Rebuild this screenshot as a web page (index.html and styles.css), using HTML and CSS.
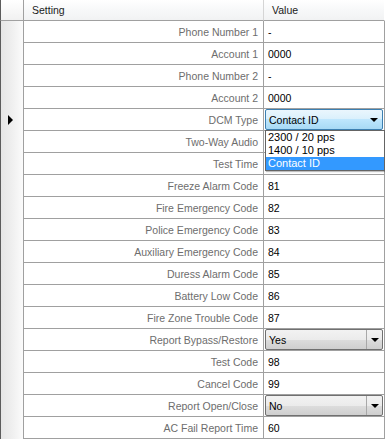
FILE: index.html
```html
<!DOCTYPE html>
<html>
<head>
<meta charset="utf-8">
<link rel="stylesheet" href="styles.css">
</head>
<body>
<div class="grid">
  <div class="rh corner"></div><div class="hc hc-set">Setting</div><div class="hc hc-val">Value</div>

  <div class="rh"></div><div class="name">Phone Number 1</div><div class="val">-</div>
  <div class="rh"></div><div class="name">Account 1</div><div class="val">0000</div>
  <div class="rh"></div><div class="name">Phone Number 2</div><div class="val">-</div>
  <div class="rh"></div><div class="name">Account 2</div><div class="val">0000</div>
  <div class="rh"><span class="cur"></span></div><div class="name">DCM Type</div>
  <div class="val has-combo">
    <div class="combo combo-hot"><span class="combo-text">Contact ID</span><span class="combo-btn"><i class="arr"></i></span></div>
    <div class="list">
      <div class="item">2300 / 20 pps</div>
      <div class="item">1400 / 10 pps</div>
      <div class="item sel">Contact ID</div>
    </div>
  </div>
  <div class="rh"></div><div class="name">Two-Way Audio</div><div class="val"></div>
  <div class="rh"></div><div class="name">Test Time</div><div class="val"></div>
  <div class="rh"></div><div class="name">Freeze Alarm Code</div><div class="val">81</div>
  <div class="rh"></div><div class="name">Fire Emergency Code</div><div class="val">82</div>
  <div class="rh"></div><div class="name">Police Emergency Code</div><div class="val">83</div>
  <div class="rh"></div><div class="name">Auxiliary Emergency Code</div><div class="val">84</div>
  <div class="rh"></div><div class="name">Duress Alarm Code</div><div class="val">85</div>
  <div class="rh"></div><div class="name">Battery Low Code</div><div class="val">86</div>
  <div class="rh"></div><div class="name">Fire Zone Trouble Code</div><div class="val">87</div>
  <div class="rh"></div><div class="name">Report Bypass/Restore</div>
  <div class="val has-combo">
    <div class="combo combo-gray"><span class="combo-text">Yes</span><span class="combo-btn"><i class="arr"></i></span></div>
  </div>
  <div class="rh"></div><div class="name">Test Code</div><div class="val">98</div>
  <div class="rh"></div><div class="name">Cancel Code</div><div class="val">99</div>
  <div class="rh"></div><div class="name">Report Open/Close</div>
  <div class="val has-combo">
    <div class="combo combo-gray"><span class="combo-text">No</span><span class="combo-btn"><i class="arr"></i></span></div>
  </div>
  <div class="rh"></div><div class="name">AC Fail Report Time</div><div class="val">60</div>
</div>
</body>
</html>
```

FILE: styles.css
```css
* { box-sizing: border-box; }
html, body {
  margin: 0;
  padding: 0;
  background: #ffffff;
  overflow: hidden;
}
body {
  font-family: "Liberation Sans", Arial, sans-serif;
  font-size: 10.5px;
  color: #000;
}
.grid {
  display: grid;
  grid-template-columns: 24px 240px 121px;
  grid-template-rows: 21px repeat(19, 22px);
  width: 385px;
  height: 439px;
}
.rh {
  border-left: 1px solid #5c5c5c;
  border-right: 1px solid #a0a0a0;
  background: linear-gradient(to right, #e6e6e6 0%, #efefef 50%, #fbfbfb 100%);
  position: relative;
  display: flex;
  align-items: center;
}
.rh.corner {
  background: linear-gradient(#ffffff, #f1f1f1);
  border-bottom: 1px solid #a0a0a0;
}
.cur {
  width: 0;
  height: 0;
  margin-left: 7px;
  border-left: 5px solid #000;
  border-top: 5px solid transparent;
  border-bottom: 5px solid transparent;
}
.hc {
  background: linear-gradient(#ffffff 0%, #f7f8f9 50%, #f1f2f3 100%);
  border-bottom: 1px solid #a0a0a0;
  display: flex;
  align-items: center;
  color: #1a1a1a;
  padding-left: 8px;
}
.hc-set { border-right: 1px solid #d5d5d5; }
.hc-val { border-right: 1px solid #ffffff; }
.name, .val {
  border-bottom: 1px solid #a0a0a0;
  border-right: 1px solid #a0a0a0;
  display: flex;
  align-items: center;
  white-space: nowrap;
}
.name {
  justify-content: flex-end;
  padding-right: 5px;
  color: #6d6d6d;
}
.val {
  padding-left: 4px;
  color: #000;
}
.has-combo {
  position: relative;
  padding: 0 1px 0 1px;
  align-items: stretch;
}
.combo {
  flex: 1;
  display: flex;
  align-items: center;
  border-radius: 2px;
  margin: 0 0 0 0;
}
.combo-text {
  flex: 1;
  padding-left: 3px;
}
.combo-btn {
  width: 16px;
  align-self: stretch;
  display: flex;
  align-items: center;
  justify-content: center;
}
.arr {
  width: 0;
  height: 0;
  border-top: 4px solid #000;
  border-left: 4px solid transparent;
  border-right: 4px solid transparent;
  margin-top: 1px;
}
.combo-hot {
  border: 1px solid #3c7fb1;
  background: linear-gradient(#eaf6fd 0%, #d9f0fc 50%, #bee6fd 50%, #a7d9f5 100%);
}
.combo-gray {
  border: 1px solid #707070;
  background: linear-gradient(#f2f2f2 0%, #ebebeb 50%, #dddddd 50%, #cfcfcf 100%);
}
.combo-gray .combo-btn {
  border-left: 1px solid #a8a8a8;
}
.list {
  position: absolute;
  top: 21px;
  left: 1px;
  width: 120px;
  border: 1px solid #646464;
  background: #fff;
  box-shadow: 1px 1px 1px rgba(0,0,0,0.25);
  z-index: 5;
}
.item {
  height: 13px;
  line-height: 13px;
  padding-left: 2px;
  color: #000;
  font-size: 11px;
}
.item.sel {
  background: #3399ff;
  color: #fff;
}
```
